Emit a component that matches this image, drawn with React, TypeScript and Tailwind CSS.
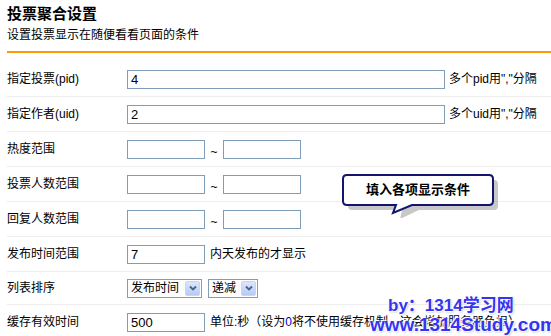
import React from 'react';

const font = "font-['Liberation_Sans','Noto_Sans_CJK_SC',sans-serif]";

function TextBox({ value = '', w }: { value?: string; w: string }) {
  return (
    <div className={`${w} h-[19px] border border-[#7f9db9] bg-white flex items-center pl-[3px] text-[13px] leading-none text-black`}>
      {value}
    </div>
  );
}

function Range() {
  return (
    <div className="flex items-center">
      <TextBox w="w-[78px]" />
      <span className="w-[18px] text-center text-[12px] pt-[6px]">~</span>
      <TextBox w="w-[78px]" />
    </div>
  );
}

function Select({ label, w }: { label: string; w: string }) {
  return (
    <div className={`${w} h-[19px] border border-[#7f9db9] bg-white flex items-center justify-between pl-[3px] pr-[1px]`}>
      <span className="text-[12px] leading-none">{label}</span>
      <div className="w-[15px] h-[15px] rounded-[2px] bg-gradient-to-b from-[#dbe6fe] to-[#b7cbf7] border border-[#c3d3fd] flex items-center justify-center">
        <svg width="8" height="6" viewBox="0 0 8 6">
          <path d="M1 1.5 L4 4.5 L7 1.5" stroke="#4d6185" strokeWidth="1.8" fill="none" />
        </svg>
      </div>
    </div>
  );
}

function Row({ label, children, h = 'h-[35px]' }: { label: string; children: React.ReactNode; h?: string }) {
  return (
    <div className={`${h} flex items-center border-b border-[#eeeeee]`}>
      <div className="w-[120px] text-[12px] leading-none">{label}</div>
      <div className="flex items-center">{children}</div>
    </div>
  );
}

export default function App() {
  return (
    <div className={`relative w-[551px] h-[336px] overflow-hidden bg-white text-black ${font}`}>
      <div className="pl-[7px]">
        <div className="pt-[6px] text-[15px] font-bold leading-[16px]">投票聚合设置</div>
        <div className="pt-[5px] text-[12px] leading-[16px]">设置投票显示在随便看看页面的条件</div>
        <div className="mt-[8px] h-[2px] bg-[#ff9900]" />
        <div className="pt-[9px]">
          <Row label="指定投票(pid)">
            <TextBox value="4" w="w-[318px]" />
            <span className="pl-[4px] text-[12px]">多个pid用","分隔</span>
          </Row>
          <Row label="指定作者(uid)">
            <TextBox value="2" w="w-[318px]" />
            <span className="pl-[4px] text-[12px]">多个uid用","分隔</span>
          </Row>
          <Row label="热度范围">
            <Range />
          </Row>
          <Row label="投票人数范围">
            <Range />
          </Row>
          <Row label="回复人数范围">
            <Range />
          </Row>
          <Row label="发布时间范围">
            <TextBox value="7" w="w-[78px]" />
            <span className="pl-[5px] text-[12px]">内天发布的才显示</span>
          </Row>
          <Row label="列表排序" h="h-[33px]">
            <Select label="发布时间" w="w-[75px]" />
            <div className="w-[6px]" />
            <Select label="递减" w="w-[50px]" />
          </Row>
          <Row label="缓存有效时间">
            <TextBox value="500" w="w-[78px]" />
            <span className="pl-[5px] text-[12px] whitespace-nowrap">
              单位:秒（设为<span className="text-[#0000cc]">0</span>将不使用缓存机制，这会增加服务器负担）
            </span>
          </Row>
        </div>
      </div>

      {/* callout bubble */}
      <div className="absolute left-[341px] top-[172px] w-[160px] h-[46px]">
        <svg width="160" height="46" viewBox="0 0 160 46" className="absolute inset-0">
          <path
            d="M8 5 H150 Q154 5 154 9 V31 Q154 35 150 35 H75 L56 44 L58 35 H8 Q4 35 4 31 V9 Q4 5 8 5 Z"
            fill="#9a9a9a"
            opacity="0.55"
            transform="translate(3 3)"
          />
          <path
            d="M6 3 H148 Q152 3 152 7 V29 Q152 33 148 33 H71 L52 41 L55 33 H6 Q2 33 2 29 V7 Q2 3 6 3 Z"
            fill="#ffffff"
            stroke="#14146e"
            strokeWidth="2"
          />
        </svg>
        <div className="absolute left-[2px] top-[3px] w-[150px] h-[30px] flex items-center justify-center text-[13px] font-bold">
          填入各项显示条件
        </div>
      </div>

      {/* watermark */}
      <div className="absolute right-0 top-[297px] w-[181px] font-['Liberation_Sans','Noto_Sans_CJK_SC',sans-serif] font-bold text-[#3535f0] [text-shadow:0_0_2px_#fff,1px_1px_1px_#fff,-1px_-1px_1px_#fff,1px_1px_2px_#999]">
        <div className="pl-[18px] text-[17px] leading-[18px]">by：1314学习网</div>
        <div className="text-[19px] leading-[20px] whitespace-nowrap">www.1314Study.com</div>
      </div>
    </div>
  );
}
